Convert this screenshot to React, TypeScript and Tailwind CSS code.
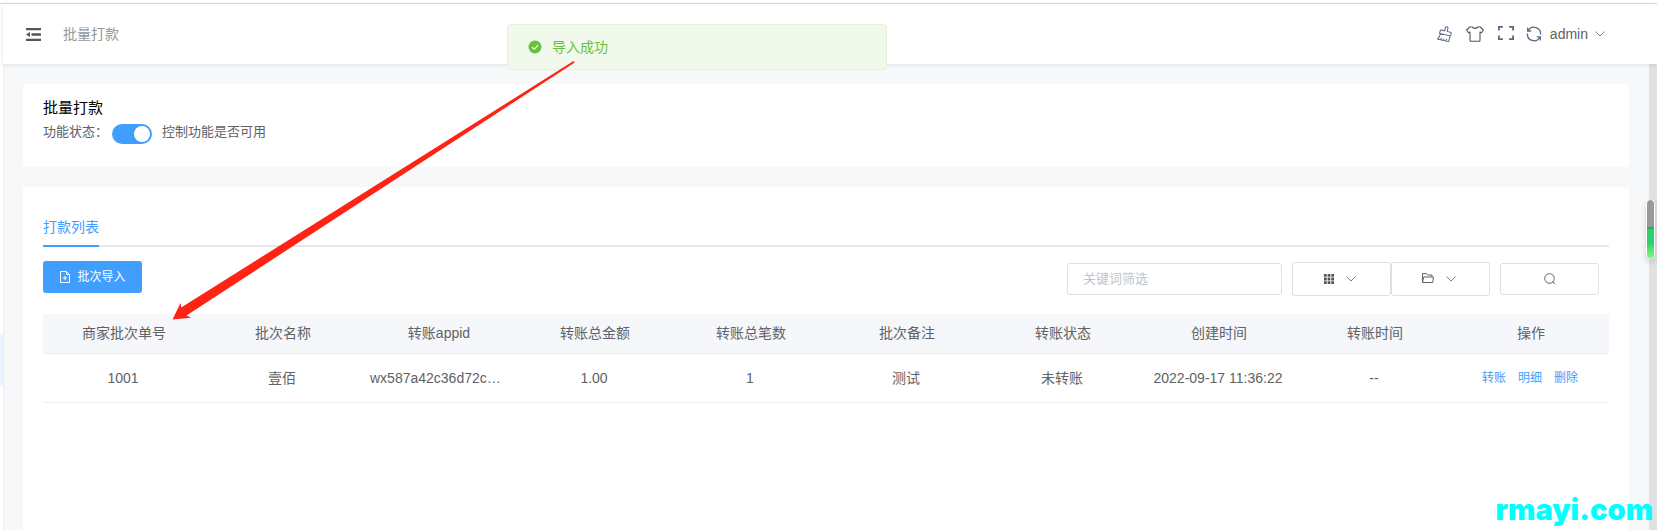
import { useState } from "react";
import type { ReactNode } from "react";

const columns = [
  "商家批次单号",
  "批次名称",
  "转账appid",
  "转账总金额",
  "转账总笔数",
  "批次备注",
  "转账状态",
  "创建时间",
  "转账时间",
];

const rows = [
  {
    id: "1001",
    cells: [
      "1001",
      "壹佰",
      "wx587a42c36d72c1f5",
      "1.00",
      "1",
      "测试",
      "未转账",
      "2022-09-17 11:36:22",
      "--",
    ],
  },
];

export default function App() {
  return (
    <div className="relative flex min-h-screen flex-col overflow-hidden bg-white pt-[3px] font-['Liberation_Sans','Noto_Sans_CJK_SC',sans-serif] text-sm text-[#606266]">
      <div className="flex flex-1 border-t border-[#d9d9db]">
        <SideBarEdge />
        <div className="flex min-w-0 flex-1 flex-col">
          <Header />
          <div className="flex flex-1">
            <main className="flex min-w-0 flex-1 flex-col gap-5 border-l border-[#eceef0] bg-[#f6f8f9] pt-5 pr-5 pl-[19px]">
              <StatusCard />
              <ListCard />
            </main>
            <div className="w-2 bg-[#e0e1e3]" />
          </div>
        </div>
      </div>
      <Message />
      <Arrow />
      <div className="absolute top-[199px] right-[2px] h-[60px] w-[9px] overflow-hidden rounded-full border border-white bg-[#999] shadow-[0_3px_6px_rgba(0,0,0,0.15)]">
        <div className="mt-[27px] h-[31px] border-t-2 border-[#18b558] bg-linear-to-b from-[#2bd06a] from-50% to-[#7dfa80]" />
      </div>
      <div className="absolute right-1 bottom-0 font-['Inter',sans-serif] text-[29px] leading-10 font-black text-[#00ffff]">
        rmayi.com
      </div>
    </div>
  );
}

function SideBarEdge() {
  return (
    <div className="w-[3px] bg-white pt-[331px]">
      <div className="h-[50px] bg-[#e8f4ff]" />
    </div>
  );
}

function Header() {
  return (
    <header className="z-10 flex h-[60px] items-center justify-between bg-white pr-[52px] pl-[23px] shadow-[0_1px_4px_rgba(0,21,41,0.1)]">
      <div className="flex items-center gap-[22px]">
        <button type="button" aria-label="menu">
          <svg width="15" height="13" viewBox="0 0 15 13" fill="#555">
            <path d="M0 0h15v2.300H0zM5.500 5.300H15v2.400H5.500zM0 10.700h15V13H0zM4 4v5L0 6.500z" />
          </svg>
        </button>
        <span className="text-[#979797]">批量打款</span>
      </div>
      <div className="flex items-center">
        <button type="button" aria-label="clear" className="mr-[13px]">
          <Icon size={16} color="#5a6884">
            <g transform="rotate(13 8 8)">
              <path d="M7 5V1.900a1.300 1.300 0 0 1 2.600 0V5h3.300a1 1 0 0 1 1 1v2.700H2.600V6a1 1 0 0 1 1-1zM3.400 8.700Q3.600 12 1.800 14.600h11.500V8.700M5.400 14.600v-2.100M8 14.600v-1.600M10.600 14.600v-2.100" />
            </g>
          </Icon>
        </button>
        <button type="button" aria-label="theme" className="mr-[14px]">
          <svg
            width="18"
            height="16"
            viewBox="0 0 18 16"
            fill="none"
            stroke="#555"
            strokeWidth="1.100"
            strokeLinejoin="round"
          >
            <path d="M6.300 1Q9 3.800 11.700 1h2.600L17.400 4l-1.900 2.800-1.500-.8v8.200q0 1-1 1H5q-1 0-1-1V6l-1.500.8L.6 4 3.700 1z" />
          </svg>
        </button>
        <button type="button" aria-label="fullscreen" className="mr-3 pb-[2px]">
          <svg
            width="16"
            height="14"
            viewBox="0 0 16 14"
            fill="none"
            stroke="#5a6884"
            strokeWidth="1.800"
          >
            <path d="M.9 4.500V.9h4M11.100.9h4v3.600M15.100 9.500v3.600h-4M4.900 13.100h-4V9.500" />
          </svg>
        </button>
        <button type="button" aria-label="refresh" className="mr-2">
          <Icon size={16} color="#5a6884" width={1.3}>
            <path d="M2.300 4.700A6.500 6.500 0 0 1 14.500 8.500M13.700 11.300A6.500 6.500 0 0 1 1.500 7.500M1.700 1.500v3.600h3.600M14.300 14.500v-3.600h-3.600" />
          </Icon>
        </button>
        <button type="button" className="flex items-center gap-[7px]">
          admin
          <Chevron />
        </button>
      </div>
    </header>
  );
}

function StatusCard() {
  const [enabled, setEnabled] = useState(true);

  return (
    <section className="h-[83px] bg-white px-5 pt-3">
      <h1 className="text-[15px] leading-6 text-black">批量打款</h1>
      <div className="flex h-6 items-center text-[13px]">
        <label htmlFor="enabled" className="w-[69px]">
          功能状态：
        </label>
        <input
          id="enabled"
          type="checkbox"
          role="switch"
          checked={enabled}
          onChange={(e) => setEnabled(e.target.checked)}
          className="mt-1 mr-[10px] flex h-5 w-10 appearance-none items-center rounded-full bg-[#dcdfe6] px-[2px] before:size-4 before:rounded-full before:bg-white checked:justify-end checked:bg-[#409eff]"
        />
        控制功能是否可用
      </div>
    </section>
  );
}

function ListCard() {
  return (
    <section className="flex-1 bg-white px-5 pt-5">
      <div role="tablist" className="flex border-b-2 border-[#e4e7ed]">
        <button
          type="button"
          role="tab"
          aria-selected="true"
          className="-mb-[2px] h-10 border-b-2 border-[#409eff] leading-10 text-[#409eff]"
        >
          打款列表
        </button>
      </div>
      <div className="mt-[15px] flex items-start justify-between pr-[10px]">
        <button
          type="button"
          className="-mt-px flex h-8 w-[99px] items-center justify-center gap-[6px] rounded-[3px] bg-[#409eff] text-xs text-white"
        >
          <svg
            width="12"
            height="12"
            viewBox="0 0 12 12"
            fill="none"
            stroke="currentColor"
          >
            <path d="M7.500.5h-6v11h9V3.500zM7.500.5v3h3M6 4.800v4.400M3.800 7h4.400" />
          </svg>
          批次导入
        </button>
        <div className="flex items-center gap-[10px]">
          <input
            type="text"
            aria-label="关键词筛选"
            placeholder="关键词筛选"
            className="h-8 w-[215px] rounded-[3px] border border-[#dcdfe6] px-[15px] pb-[2px] text-[13px] outline-none placeholder:text-[#c0c4cc]"
          />
          <div className="flex">
            <ToolButton label="columns">
              <svg width="10" height="10" viewBox="0 0 10 10" fill="#555">
                <path d="M0 0h2.700v2.700H0zM3.600 0h2.800v2.700H3.600zM7.300 0H10v2.700H7.300zM0 3.600h2.700v2.800H0zM3.600 3.600h2.800v2.800H3.600zM7.300 3.600H10v2.800H7.300zM0 7.300h2.700V10H0zM3.600 7.300h2.800V10H3.600zM7.300 7.300H10V10H7.300z" />
              </svg>
            </ToolButton>
            <ToolButton label="export">
              <svg
                width="12"
                height="13"
                viewBox="0 0 12 13"
                fill="none"
                stroke="#606266"
              >
                <path d="M.5 9.500V.5h3.800l1.200 1.500h4.500v2M.5 9.500l1.200-5.500h9.800l-.8 5.500z" />
              </svg>
            </ToolButton>
          </div>
          <button
            type="button"
            aria-label="search"
            className="flex h-8 w-[99px] items-center justify-center rounded-[3px] border border-[#dcdfe6]"
          >
            <svg
              width="12"
              height="12"
              viewBox="0 0 12 12"
              fill="none"
              stroke="#606266"
            >
              <circle cx="5.500" cy="5.500" r="4.800" />
              <path d="M8.800 8.800l2.200 2.400" />
            </svg>
          </button>
        </div>
      </div>
      <table className="mt-[18px] w-full table-fixed border-collapse text-center">
        <colgroup>
          <col className="w-[162px]" />
        </colgroup>
        <thead>
          <tr className="h-[39px] border-b border-[#ebeef5] bg-[#f5f7fa]">
            {columns.map((column) => (
              <th key={column} className="font-normal">
                {column}
              </th>
            ))}
            <th className="font-normal">操作</th>
          </tr>
        </thead>
        <tbody>
          {rows.map((row) => (
            <tr key={row.id} className="h-[49px] border-b border-[#ebeef5]">
              {row.cells.map((cell, i) => (
                <td key={i} className="truncate pr-[11px] pl-[9px]">
                  {cell}
                </td>
              ))}
              <td className="pr-[2px]">
                <div className="flex justify-center gap-3 text-xs text-[#409eff]">
                  <a href="#transfer">转账</a>
                  <a href="#detail">明细</a>
                  <a href="#delete">删除</a>
                </div>
              </td>
            </tr>
          ))}
        </tbody>
      </table>
    </section>
  );
}

function ToolButton({
  label,
  children,
}: {
  label: string;
  children: ReactNode;
}) {
  return (
    <button
      type="button"
      aria-label={label}
      className="flex h-[34px] w-[99px] items-center justify-center gap-3 rounded-[3px] border border-[#dcdfe6] pr-1"
    >
      {children}
      <Chevron />
    </button>
  );
}

function Message() {
  return (
    <div
      role="alert"
      className="absolute top-6 left-[507px] z-20 flex h-[46px] w-[380px] items-center gap-[10px] rounded border border-[#e1f3d8] bg-[#f0f9eb] px-5 text-[#67c23a]"
    >
      <svg width="14" height="14" viewBox="0 0 14 14">
        <circle cx="7" cy="7" r="6.500" fill="#67c23a" />
        <path
          d="M4 7.100l2.200 2.100 3.900-4"
          fill="none"
          stroke="#fff"
          strokeWidth="1.100"
        />
      </svg>
      导入成功
    </div>
  );
}

// Points from the message to the freshly imported row
function Arrow() {
  return (
    <svg
      className="pointer-events-none absolute top-[60px] left-[172px] z-30"
      width="404"
      height="262"
      viewBox="172 60 404 262"
      fill="#ff2316"
    >
      <path d="M172.500 319.500L180.500 303l.7 4.500L573.500 61l1.200 1.500L186.500 315.500l4.500 2.200z" />
    </svg>
  );
}

function Chevron() {
  return (
    <svg
      width="10"
      height="6"
      viewBox="0 0 10 6"
      fill="none"
      stroke="#7d8086"
    >
      <path d="M.5.5L5 5 9.500.5" />
    </svg>
  );
}

function Icon({
  size,
  color,
  width = 1,
  children,
}: {
  size: number;
  color: string;
  width?: number;
  children: ReactNode;
}) {
  return (
    <svg
      width={size}
      height={size}
      viewBox="0 0 16 16"
      fill="none"
      stroke={color}
      strokeWidth={width}
    >
      {children}
    </svg>
  );
}
